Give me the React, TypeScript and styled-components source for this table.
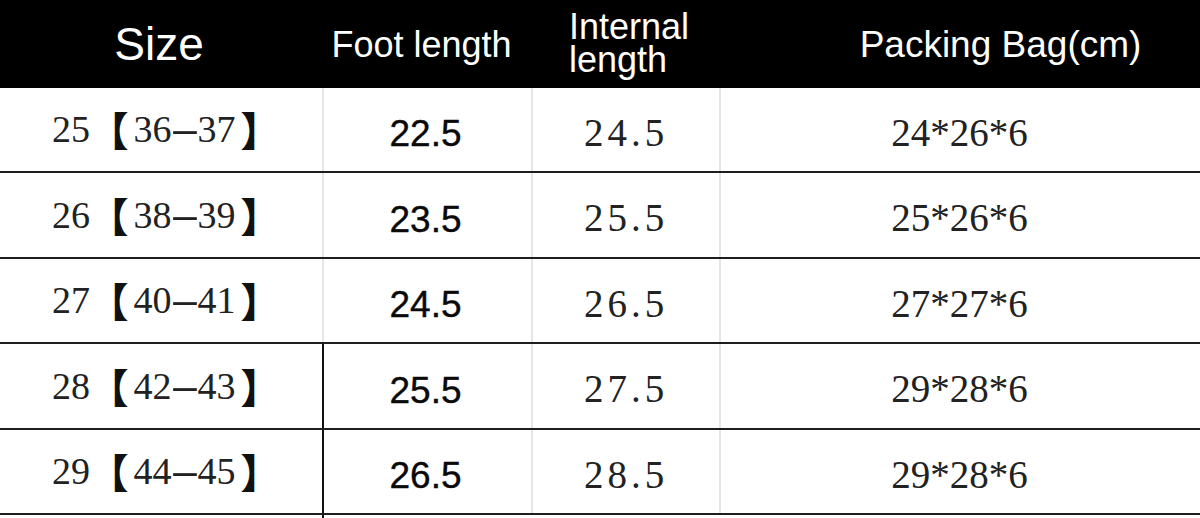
import React from "react";
import styled, { createGlobalStyle } from "styled-components";

const Global = createGlobalStyle`
  html, body { margin: 0; padding: 0; background: #fff; }
  body { width: 1200px; height: 518px; overflow: hidden; }
`;

const Table = styled.div`
  width: 1200px;
  display: flex;
  flex-direction: column;
`;

const cols = "324px 209px 188px 1fr";

const HeaderRow = styled.div`
  display: grid;
  grid-template-columns: ${cols};
  height: 87.5px;
  background: #000;
  color: #fff;
  font-family: "Liberation Sans", Arial, sans-serif;
`;

const HeadCell = styled.div<{ $size?: number; $shift?: number; $align?: string }>`
  display: flex;
  align-items: center;
  justify-content: ${(p) => p.$align ?? "center"};
  font-size: ${(p) => p.$size ?? 36}px;
  line-height: 33px;
  padding-left: ${(p) => p.$shift ?? 0}px;
  padding-top: 2px;
  box-sizing: border-box;
  white-space: nowrap;
`;

const HeadLabel = styled.span<{ $offset?: number }>`
  margin-left: ${(p) => p.$offset ?? 0}px;
`;

const Stack = styled.div`
  display: flex;
  flex-direction: column;
  margin-left: 36px;
  margin-top: -4px;
`;

const Row = styled.div`
  display: grid;
  grid-template-columns: ${cols};
  height: 85.5px;
  box-sizing: border-box;
  border-bottom: 2px solid #1e1e1e;
`;

const Cell = styled.div<{ $line?: "light" | "dark" | "none" }>`
  display: flex;
  align-items: center;
  justify-content: center;
  box-sizing: border-box;
  padding-top: 6px;
  border-right: 2px solid
    ${(p) => (p.$line === "dark" ? "#111" : p.$line === "none" ? "transparent" : "#e6e6e6")};
`;

const SizeCell = styled(Cell)`
  justify-content: flex-start;
  padding-left: 52px;
`;

const SizeText = styled.span`
  font-family: "Liberation Serif", "Noto Sans CJK SC", serif;
  font-size: 38px;
  line-height: 1;
  color: #222;
  margin-top: -6px;
  white-space: nowrap;
  display: flex;
  align-items: center;
`;

const Bracket = styled.span<{ $open?: boolean }>`
  font-family: "Noto Sans CJK SC", sans-serif;
  font-weight: 900;
  font-size: 40px;
  color: #111;
  display: inline-block;
  line-height: 1;
  margin: ${(p) => (p.$open ? "0 5px 0 -11px" : "0 0 0 5px")};
`;

const Dash = styled.span`
  display: inline-block;
  width: 26px;
  text-align: center;
  transform: scaleX(2.4);
`;

const FootText = styled.span`
  font-family: "Liberation Sans", Arial, sans-serif;
  font-size: 37px;
  color: #0a0a0a;
  margin-left: -4px;
  margin-top: 4px;
  -webkit-text-stroke: 0.4px #0a0a0a;
`;

const SerifText = styled.span<{ $spacing?: number }>`
  font-family: "Liberation Serif", serif;
  font-size: 39px;
  color: #222;
  letter-spacing: ${(p) => p.$spacing ?? 0}px;
`;

const Stub = styled.div`
  display: grid;
  grid-template-columns: ${cols};
  height: 3px;
`;

const StubCell = styled.div`
  border-right: 2px solid #111;
`;

const rows = [
  { size: "25", range: ["36", "37"], foot: "22.5", inner: "24.5", bag: "24*26*6" },
  { size: "26", range: ["38", "39"], foot: "23.5", inner: "25.5", bag: "25*26*6" },
  { size: "27", range: ["40", "41"], foot: "24.5", inner: "26.5", bag: "27*27*6" },
  { size: "28", range: ["42", "43"], foot: "25.5", inner: "27.5", bag: "29*28*6" },
  { size: "29", range: ["44", "45"], foot: "26.5", inner: "28.5", bag: "29*28*6" },
];

export default function App() {
  return (
    <>
      <Global />
      <Table>
        <HeaderRow>
          <HeadCell $size={46}>
            <HeadLabel $offset={-6}>Size</HeadLabel>
          </HeadCell>
          <HeadCell>
            <HeadLabel $offset={-14}>Foot length</HeadLabel>
          </HeadCell>
          <HeadCell $align="flex-start">
            <Stack>
              <span>Internal</span>
              <span>length</span>
            </Stack>
          </HeadCell>
          <HeadCell $size={37} $shift={80}>
            Packing Bag(cm)
          </HeadCell>
        </HeaderRow>
        {rows.map((r, i) => (
          <Row key={r.size}>
            <SizeCell $line={i >= 3 ? "dark" : "light"}>
              <SizeText>
                {r.size}&nbsp;
                <Bracket $open>【</Bracket>
                {r.range[0]}
                <Dash>-</Dash>
                {r.range[1]}
                <Bracket>】</Bracket>
              </SizeText>
            </SizeCell>
            <Cell>
              <FootText>{r.foot}</FootText>
            </Cell>
            <Cell>
              <SerifText $spacing={4}>{r.inner}</SerifText>
            </Cell>
            <Cell $line="none">
              <SerifText>{r.bag}</SerifText>
            </Cell>
          </Row>
        ))}
        <Stub>
          <StubCell />
        </Stub>
      </Table>
    </>
  );
}
